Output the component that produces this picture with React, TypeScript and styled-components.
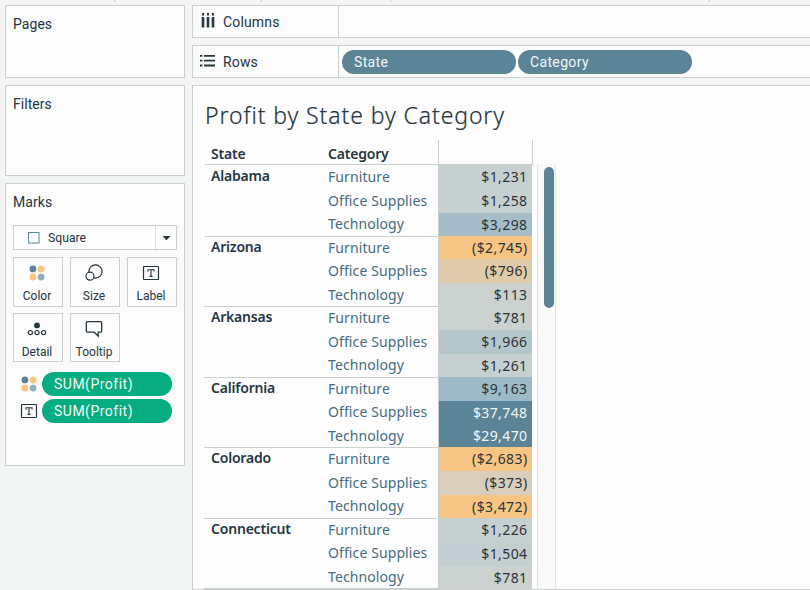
import React from 'react';
import styled, { createGlobalStyle } from 'styled-components';

const slate = '#5b8497';
const ink = '#26363f';
const line = '#cbd0ce';
const amber = '#f6c583';
const sky = '#9dbac8';

const Global = createGlobalStyle`
  * { box-sizing: border-box; }
  html, body { margin: 0; height: 100%; overflow: hidden; background: #f3f4f4; }
  #root { height: 100%; }
`;

const Page = styled.div`
  display: grid;
  grid-template-rows: 5px 1fr;
  width: 810px;
  height: 590px;
  overflow: hidden;
  background: #f3f4f4;
  color: ${ink};
  font: 14px/18px Roboto, 'Liberation Sans', sans-serif;
`;

const TickStrip = styled.div`
  display: grid;
  grid-template-columns: 115px 147px 129px 319px 1fr;
`;

const Tick = styled.span`
  height: 2px;
  border-right: 1px solid ${line};
`;

const Workspace = styled.div`
  display: grid;
  grid-template-columns: 180px 1fr;
  column-gap: 7px;
  padding-left: 5px;
  min-height: 0;
`;

const Sidebar = styled.aside`
  display: flex;
  flex-direction: column;
  gap: 7px;
`;

const Card = styled.section<{ $height: number }>`
  height: ${(p) => p.$height}px;
  padding: 9px 7px 0;
  border: 1px solid ${line};
  background: #fbfbfb;
`;

const CardTitle = styled.h2`
  margin: 0;
  font-size: 14px;
  line-height: 18px;
  font-weight: 400;
  letter-spacing: 0.05px;
`;

const MarkSelect = styled.div`
  display: grid;
  grid-template-columns: 40px 1fr 21px;
  align-items: center;
  height: 25px;
  margin-top: 14px;
  border: 1px solid ${line};
  background: #fdfdfd;
  font-size: 12.2px;
  svg { justify-self: center; }
`;

const SelectLabel = styled.span`
  margin-left: -6px;
`;

const SelectArrow = styled.span`
  display: grid;
  place-items: center;
  height: 100%;
  border-left: 1px solid #dcdfde;
`;

const ButtonGrid = styled.div`
  display: grid;
  grid-template-columns: repeat(3, 50px);
  grid-auto-rows: 50px 49px;
  gap: 6px 7px;
  margin-top: 7px;
`;

const MarkButton = styled.button`
  display: flex;
  flex-direction: column;
  align-items: center;
  padding: 6px 2px 0 0;
  border: 1px solid ${line};
  background: #fcfcfc;
  color: ${ink};
  font: 12px/16px Roboto, 'Liberation Sans', sans-serif;
  white-space: nowrap;
  svg { margin-bottom: 6px; }
`;

const Encodings = styled.div`
  display: grid;
  grid-template-columns: 32px 130px;
  grid-auto-rows: 24px;
  row-gap: 3px;
  align-items: center;
  margin-top: 10px;
  margin-left: -3px;
  svg { justify-self: center; margin-left: 6px; }
`;

const Pill = styled.div<{ $tone: string; $width: number; $spacing?: number }>`
  width: ${(p) => p.$width}px;
  height: 24px;
  padding-left: 12px;
  border-radius: 12px;
  background: ${(p) => p.$tone};
  color: #f4f7f6;
  line-height: 24px;
  letter-spacing: ${(p) => p.$spacing ?? 0.35}px;
`;

const Main = styled.main`
  display: grid;
  grid-template-rows: 33px 33px 1fr;
  row-gap: 7px;
  min-width: 0;
  min-height: 0;
`;

const Shelf = styled.div`
  display: grid;
  grid-template-columns: 146px 1fr;
  border: 1px solid ${line};
  border-right: 0;
  background: #fbfbfb;
`;

const ShelfName = styled.div`
  display: grid;
  grid-template-columns: 30px 1fr;
  align-items: center;
  border-right: 1px solid ${line};
  letter-spacing: 0.15px;
  svg { margin: -2px 0 0 7px; }
`;

const ShelfPills = styled.div`
  display: flex;
  align-items: center;
  gap: 2px;
  padding-left: 3px;
`;

const View = styled.section`
  border: 1px solid ${line};
  border-right: 0;
  background: #fdfdfd;
  overflow: hidden;
`;

const ViewTitle = styled.h1`
  margin: 12px 0 0 12px;
  font: 300 23px/34px 'Noto Sans', 'Open Sans', sans-serif;
  letter-spacing: 0.9px;
  -webkit-text-stroke: 0.2px ${ink};
`;

const Sheet = styled.div`
  display: grid;
  grid-template-columns: 329px 23px;
  margin: 8px 0 0 11px;
  font: 14px/20px 'Noto Sans', 'Open Sans', sans-serif;
`;

const HeaderRow = styled.div`
  display: grid;
  grid-template-columns: 124px 110px 95px;
  height: 25px;
  font-weight: 600;
  letter-spacing: -0.2px;
  border-bottom: 1px solid ${line};
`;

const HeaderCell = styled.span`
  padding: 4px 0 0 7px;
  & + & { padding-left: 0; }
`;

const HeaderBox = styled.span`
  border: solid ${line};
  border-width: 0 1px;
`;

const StateGroup = styled.div`
  display: grid;
  grid-template-columns: 124px 110px 94px;
  height: 70.6px;
`;

const StateName = styled.div`
  padding-left: 7px;
  border-bottom: 1px solid ${line};
  font-weight: 600;
  line-height: 21px;
  letter-spacing: -0.2px;
`;

const CategoryList = styled.div`
  display: grid;
  grid-template-rows: repeat(3, 1fr);
  border-bottom: 1px solid ${line};
  color: #456c82;
  line-height: 23.5px;
  letter-spacing: 0.1px;
`;

const ValueList = styled.div`
  display: grid;
  grid-template-rows: repeat(3, 1fr);
  border-left: 1px solid ${line};
`;

const Value = styled.div<{ $fill: string; $light?: boolean }>`
  padding-right: 4.5px;
  background: ${(p) => p.$fill};
  color: ${(p) => (p.$light ? '#f2f5f5' : '#2c3439')};
  line-height: 23.5px;
  letter-spacing: 0.4px;
  text-align: right;
`;

const ScrollTrack = styled.div`
  width: 19px;
  margin: 24px 0 0 4px;
  padding: 3px 0 0 6px;
  border: solid #e4e6e6;
  border-width: 0 1px;
  background: #f9f9f9;
`;

const ScrollThumb = styled.div`
  width: 10px;
  height: 141px;
  border-radius: 5px;
  background: ${slate};
`;

const DotsIcon = () => (
  <svg width="18" height="18" viewBox="0 0 18 18">
    <circle cx="4.9" cy="4.9" r="3.4" fill={slate} />
    <circle cx="13.1" cy="4.9" r="3.5" fill={amber} />
    <circle cx="4.9" cy="13.1" r="3.5" fill={amber} />
    <circle cx="13.1" cy="13.1" r="3.4" fill="#8fafbf" />
  </svg>
);

const SizeIcon = () => (
  <svg width="18" height="18" viewBox="0 0 18 18" fill="#fcfcfc" stroke={ink} strokeWidth="1.2">
    <circle cx="10.5" cy="7.5" r="6.6" />
    <circle cx="5" cy="12.2" r="4" />
  </svg>
);

const LabelIcon = () => (
  <svg width="18" height="18" viewBox="0 0 18 18" fill="none" stroke={ink}>
    <rect x="1.5" y="2.5" width="15" height="13" rx="0.5" strokeWidth="1.2" />
    <path d="M6 7.6V5.8H12V7.6M9 5.8V12.4M7.5 12.4H10.5" strokeWidth="1.1" />
  </svg>
);

const DetailIcon = () => (
  <svg width="20" height="18" viewBox="0 0 20 18" fill="none" stroke={ink} strokeWidth="1.2">
    <circle cx="10" cy="5.4" r="2.3" fill={ink} />
    <circle cx="3.4" cy="12.6" r="2.1" />
    <circle cx="10" cy="12.6" r="2.1" />
    <circle cx="16.6" cy="12.6" r="2.1" />
  </svg>
);

const TooltipIcon = () => (
  <svg width="18" height="18" viewBox="0 0 18 18" fill="none" stroke={ink} strokeWidth="1.3">
    <path d="M2.5 1.7H15.5Q16.7 1.7 16.7 2.9V11Q16.7 12.2 15.5 12.2H13.2V16.2L9.3 12.2H2.5Q1.3 12.2 1.3 11V2.9Q1.3 1.7 2.5 1.7Z" />
  </svg>
);

const ColumnsIcon = () => (
  <svg width="15" height="15" viewBox="0 0 15 15" fill={ink}>
    <path d="M2 0h2v2.5H2zM7 0h2v2.5H7zM12 0h2v2.5h-2zM1.7 4h2.6v10.5H1.7zM6.7 4h2.6v10.5H6.7zM11.7 4h2.6v10.5h-2.6z" />
  </svg>
);

const RowsIcon = () => (
  <svg width="15" height="13" viewBox="0 0 15 13" fill={ink}>
    <path d="M0 1h2.4v1.8H0zM4 1h11v1.8H4zM0 5.8h2.4v1.8H0zM4 5.8h11v1.8H4zM0 10.6h2.4v1.8H0zM4 10.6h11v1.8H4z" />
  </svg>
);

const SquareIcon = () => (
  <svg width="12" height="12" viewBox="0 0 12 12">
    <rect x="0.5" y="0.5" width="10.5" height="10.5" fill="#fff" stroke={slate} />
  </svg>
);

const ArrowIcon = () => (
  <svg width="9" height="6" viewBox="0 0 9 6">
    <path d="M.5 1h8l-4 4.2z" fill={ink} />
  </svg>
);

const grey = '#cbd1ce';
const paleBlue = '#c7d0d0';

type Cell = [string, string, boolean?];
const groups: { state: string; values: Cell[] }[] = [
  { state: 'Alabama', values: [['$1,231', paleBlue], ['$1,258', paleBlue], ['$3,298', '#a6bdc7']] },
  { state: 'Arizona', values: [['($2,745)', amber], ['($796)', '#dfcba9'], ['$113', grey]] },
  { state: 'Arkansas', values: [['$781', grey], ['$1,966', '#b5c6cb'], ['$1,261', paleBlue]] },
  { state: 'California', values: [['$9,163', sky], ['$37,748', slate, true], ['$29,470', slate, true]] },
  { state: 'Colorado', values: [['($2,683)', amber], ['($373)', '#d8cebb'], ['($3,472)', amber]] },
  { state: 'Connecticut', values: [['$1,226', '#c7d0d0'], ['$1,504', '#c2cecf'], ['$781', grey]] },
];
const categories = ['Furniture', 'Office Supplies', 'Technology'];

const buttons = [
  { label: 'Color', Icon: DotsIcon },
  { label: 'Size', Icon: SizeIcon },
  { label: 'Label', Icon: LabelIcon },
  { label: 'Detail', Icon: DetailIcon },
  { label: 'Tooltip', Icon: TooltipIcon },
];

export default function App() {
  return (
    <Page>
      <Global />
      <TickStrip>
        <Tick />
        <Tick />
        <Tick />
        <Tick />
      </TickStrip>
      <Workspace>
        <Sidebar>
          <Card $height={73}>
            <CardTitle>Pages</CardTitle>
          </Card>
          <Card $height={91}>
            <CardTitle>Filters</CardTitle>
          </Card>
          <Card $height={283}>
            <CardTitle>Marks</CardTitle>
            <MarkSelect>
              <SquareIcon />
              <SelectLabel>Square</SelectLabel>
              <SelectArrow>
                <ArrowIcon />
              </SelectArrow>
            </MarkSelect>
            <ButtonGrid>
              {buttons.map(({ label, Icon }) => (
                <MarkButton key={label}>
                  <Icon />
                  {label}
                </MarkButton>
              ))}
            </ButtonGrid>
            <Encodings>
              <DotsIcon />
              <Pill $tone="#05ad81" $width={130} $spacing={0.5}>SUM(Profit)</Pill>
              <LabelIcon />
              <Pill $tone="#05ad81" $width={130} $spacing={0.5}>SUM(Profit)</Pill>
            </Encodings>
          </Card>
        </Sidebar>
        <Main>
          <Shelf>
            <ShelfName>
              <ColumnsIcon />
              Columns
            </ShelfName>
            <ShelfPills />
          </Shelf>
          <Shelf>
            <ShelfName>
              <RowsIcon />
              Rows
            </ShelfName>
            <ShelfPills>
              <Pill $tone={slate} $width={174}>State</Pill>
              <Pill $tone={slate} $width={174}>Category</Pill>
            </ShelfPills>
          </Shelf>
          <View>
            <ViewTitle>Profit by State by Category</ViewTitle>
            <Sheet>
              <div>
                <HeaderRow>
                  <HeaderCell>State</HeaderCell>
                  <HeaderCell>Category</HeaderCell>
                  <HeaderBox />
                </HeaderRow>
                {groups.map(({ state, values }) => (
                  <StateGroup key={state}>
                    <StateName>{state}</StateName>
                    <CategoryList>
                      {categories.map((name) => (
                        <span key={name}>{name}</span>
                      ))}
                    </CategoryList>
                    <ValueList>
                      {values.map(([text, fill, light], i) => (
                        <Value key={i} $fill={fill} $light={light}>
                          {text}
                        </Value>
                      ))}
                    </ValueList>
                  </StateGroup>
                ))}
              </div>
              <ScrollTrack>
                <ScrollThumb />
              </ScrollTrack>
            </Sheet>
          </View>
        </Main>
      </Workspace>
    </Page>
  );
}
